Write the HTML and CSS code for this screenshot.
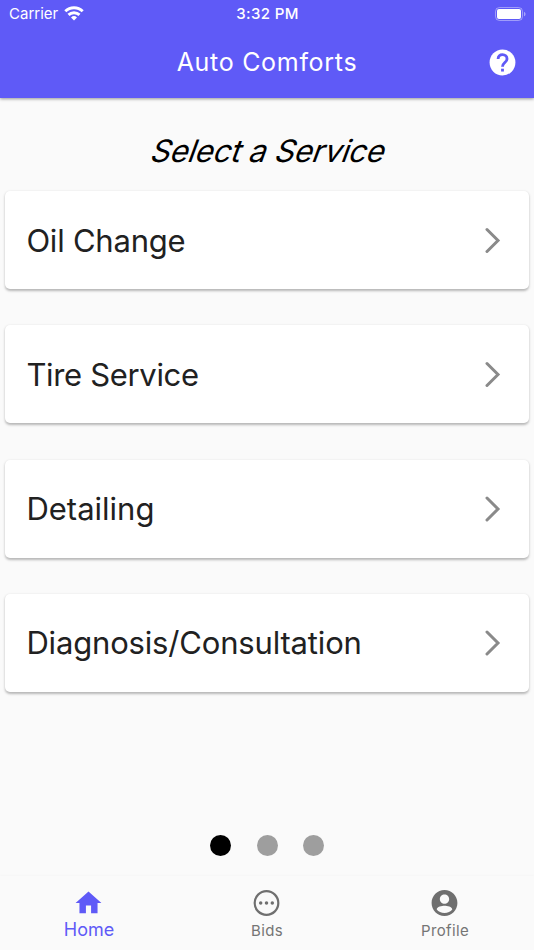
FILE: index.html
```html
<!DOCTYPE html>
<html lang="en">
<head>
<meta charset="utf-8">
<title>Auto Comforts</title>
<link rel="stylesheet" href="styles.css">
</head>
<body>
<div class="app">
  <header class="header">
    <div class="status">
      <div class="carrier"><span class="carrier-name">Carrier</span>
        <svg class="wifi" viewBox="0 0 20 15"><path d="M10 14.500l3-3.100a4.400 4.400 0 0 0-6 0z"/><path d="M4.500 8.900a8 8 0 0 1 11 0M1.300 5.300a12.500 12.500 0 0 1 17.400 0" fill="none" stroke="#fff" stroke-width="2.900"/></svg>
      </div>
      <span class="time">3:32 PM</span>
      <svg class="battery" viewBox="0 0 31 14"><rect x=".5" y=".5" width="27" height="13" rx="4" fill="none" stroke="#fff" stroke-opacity=".4"/><rect x="2" y="2" width="24" height="10" rx="2"/><path d="M29 4.700v4.600c2-.8 2-3.800 0-4.600z" opacity=".45"/></svg>
    </div>
    <div class="toolbar">
      <h1 class="title">Auto Comforts</h1>
      <svg class="help" viewBox="0 0 24 24"><circle cx="12" cy="12" r="10"/><path d="M8.600 9.200C8.600 7.100 10 5.900 12 5.900s3.500 1.400 3.500 3.300c0 2.700-3.500 3-3.500 6" fill="none" stroke="#5f5af7" stroke-width="2.200"/><path d="M10.900 16.800h2.200v2.200h-2.200z" fill="#5f5af7"/></svg>
    </div>
  </header>
  <main class="content">
    <h2 class="heading">Select a Service</h2>
    <div class="services">
      <div class="card"><span class="label oil">Oil Change</span><svg class="chevron" viewBox="0 0 16 26"><path d="M2 2.500l11 11-11 11"/></svg></div>
      <div class="card"><span class="label tire">Tire Service</span><svg class="chevron" viewBox="0 0 16 26"><path d="M2 2.500l11 11-11 11"/></svg></div>
      <div class="card"><span class="label detail">Detailing</span><svg class="chevron" viewBox="0 0 16 26"><path d="M2 2l11 11L2 24"/></svg></div>
      <div class="card"><span class="label diag">Diagnosis/Consultation</span><svg class="chevron" viewBox="0 0 16 26"><path d="M2 2l11 11L2 24"/></svg></div>
    </div>
    <div class="dots"><i class="dot active"></i><i class="dot"></i><i class="dot"></i></div>
  </main>
  <nav class="tabs">
    <div class="tab selected"><svg class="tab-icon" viewBox="0 0 24 24"><path d="M10 20v-6h4v6h5v-8h3L12 3 2 12h3v8z"/></svg><span>Home</span></div>
    <div class="tab"><svg class="tab-icon" viewBox="0 0 24 24"><circle cx="12" cy="12" r="9.150" fill="none" stroke="#6f6f6f" stroke-width="1.700"/><circle cx="7.500" cy="12" r="1.350"/><circle cx="12" cy="12" r="1.350"/><circle cx="16.500" cy="12" r="1.350"/></svg><span>Bids</span></div>
    <div class="tab"><svg class="tab-icon" viewBox="0 0 24 24"><path d="M12 2C6.480 2 2 6.480 2 12s4.480 10 10 10 10-4.480 10-10S17.520 2 12 2zm0 3.400c1.990 0 3.600 1.610 3.600 3.600s-1.610 3.600-3.600 3.600S8.400 10.990 8.400 9s1.610-3.600 3.600-3.600zm0 14.300c-2.500 0-4.710-1.080-6-2.720.030-1.990 4-2.780 6-2.780 1.990 0 5.970.790 6 2.780-1.290 1.640-3.500 2.720-6 2.720z"/></svg><span>Profile</span></div>
  </nav>
</div>
</body>
</html>
```
FILE: styles.css
```css
* { box-sizing: border-box; }
body { margin: 0; background: #fafafa; font-family: Inter, sans-serif; }
.app { height: 950px; display: flex; flex-direction: column; overflow: hidden; }
.header { height: 98px; background: #5f5af7; color: #fff; fill: #fff; box-shadow: 0 1px 3px rgba(0,0,0,.4); }
.status { height: 27px; display: grid; grid-template-columns: 1fr auto 1fr; align-items: center; padding: 0 8px 0 9px; font-size: 15px; }
.carrier { display: flex; align-items: center; gap: 6px; }
.wifi { width: 20px; height: 15px; }
.time { font-weight: 500; letter-spacing: .35px; }
.battery { width: 31px; height: 14px; justify-self: end; }
.toolbar { height: 71px; display: grid; grid-template-columns: 1fr auto 1fr; align-items: center; padding: 0 16px; }
.title { grid-column: 2; margin: -1px 0 0; font-size: 25px; font-weight: 400; letter-spacing: .7px; }
.help { width: 31px; height: 31px; justify-self: end; }
.content { flex: 1; display: flex; flex-direction: column; }
.heading { margin: 33px 0 21px; padding-left: 5px; line-height: 39px; text-align: center; font-size: 31px; font-weight: 400; letter-spacing: -.22px; transform: skewX(-20deg); }
.services { display: grid; gap: 36.300px; padding: 0 5.400px; }
.card { height: 98px; background: #fff; border-radius: 5px; box-shadow: 0 1.500px 2.500px rgba(0,0,0,.27); display: flex; align-items: center; justify-content: space-between; padding: 0 28px 0 21px; }
.label { font-size: 31px; font-weight: 400; color: #212121; }
.oil { letter-spacing: -.22px; }
.tire { letter-spacing: -.33px; }
.detail { letter-spacing: 0; }
.diag { letter-spacing: -.17px; }
.chevron { width: 16px; height: 26px; fill: none; stroke: #8a8a8a; stroke-width: 3; stroke-linecap: round; }
.dots { display: flex; justify-content: center; gap: 25.400px; margin-top: 143px; }
.dot { width: 21px; height: 21px; border-radius: 50%; background: #9e9e9e; }
.active { background: #000; }
.tabs { height: 74px; display: grid; grid-template-columns: repeat(3, 1fr); box-shadow: 0 -1px 2px rgba(0,0,0,.02); }
.tab { display: flex; flex-direction: column; align-items: center; padding-top: 11px; color: #757575; fill: #6f6f6f; font-size: 15px; letter-spacing: .35px; line-height: 23px; }
.selected { color: #5f5af7; fill: #5f5af7; font-size: 18px; line-height: 21px; letter-spacing: 0; }
.tab-icon { width: 31px; height: 32px; margin-right: 1px; }
```
